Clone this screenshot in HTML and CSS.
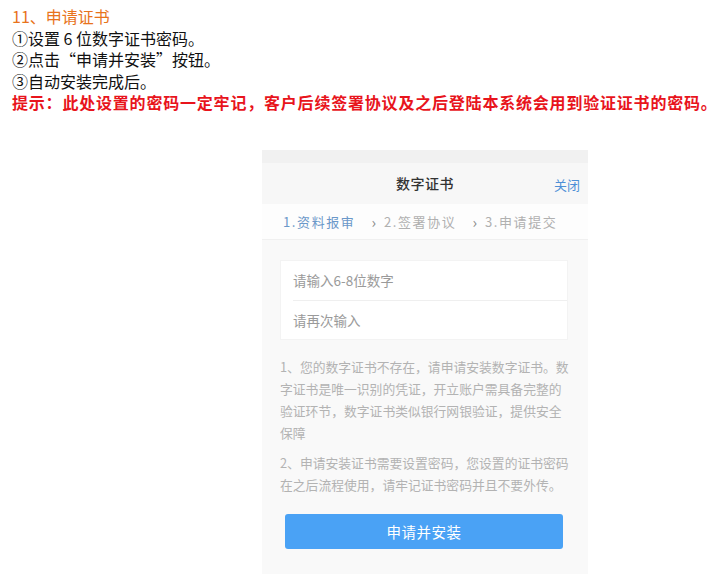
FILE: index.html
```html
<!DOCTYPE html>
<html lang="zh">
<head>
<meta charset="utf-8">
<link rel="stylesheet" href="styles.css">
</head>
<body>
<div class="doc">
  <div class="h">11、申请证书</div>
  <div class="line">①设置 6 位数字证书密码。</div>
  <div class="line">②点击“申请并安装”按钮。</div>
  <div class="line">③自动安装完成后。</div>
  <div class="tip">提示：此处设置的密码一定牢记，客户后续签署协议及之后登陆本系统会用到验证证书的密码。</div>
</div>
<div class="phone">
  <div class="strip"></div>
  <div class="nav">
    <span class="nav-title">数字证书</span>
    <span class="nav-close">关闭</span>
  </div>
  <div class="steps">
    <span class="step active">1.资料报审</span>
    <span class="arrow">›</span>
    <span class="step">2.签署协议</span>
    <span class="arrow">›</span>
    <span class="step">3.申请提交</span>
  </div>
  <div class="form">
    <div class="row">请输入6-8位数字</div>
    <div class="row">请再次输入</div>
  </div>
  <div class="notes">
    <p>1、您的数字证书不存在，请申请安装数字证书。数字证书是唯一识别的凭证，开立账户需具备完整的验证环节，数字证书类似银行网银验证，提供安全保障</p>
    <p>2、申请安装证书需要设置密码，您设置的证书密码在之后流程使用，请牢记证书密码并且不要外传。</p>
  </div>
  <div class="btn-wrap"><div class="btn">申请并安装</div></div>
</div>
</body>
</html>
```
FILE: styles.css
```css
* { box-sizing: border-box; }
html, body { margin: 0; padding: 0; background: #fff; }
body { font-family: "Noto Sans CJK SC", "Noto Sans", sans-serif; }
.doc { padding: 6px 0 0 12px; }
.h { color: #e8731c; font-size: 16px; line-height: 21.5px; }
.line { color: #111; font-size: 16px; line-height: 21.5px; }
.tip { color: #e8141c; font-size: 16px; font-weight: bold; line-height: 21.5px; letter-spacing: 0.8px; white-space: nowrap; }
.phone { width: 326px; margin: 36px 0 0 262px; background: #f9f9f9; display: flex; flex-direction: column; }
.strip { height: 13px; background: #f1f1f1; }
.nav { height: 41px; background: #f7f7f7; display: flex; align-items: center; justify-content: center; position: relative; }
.nav-title { font-size: 14px; color: #333; font-weight: 500; letter-spacing: 0.5px; }
.nav-close { position: absolute; right: 8px; top: 12px; font-size: 13px; color: #4d8fd6; }
.steps { height: 36px; background: #fdfdfd; display: flex; align-items: center; padding-left: 21px; font-size: 13px; color: #b0b0b0; border-bottom: 1px solid #f0f0f0; }
.step { letter-spacing: 1.6px; }
.step.active { color: #6b98c9; }
.arrow { margin: 0 8px 0 16px; font-size: 15px; color: #888; }
.form { margin: 20px 20px 0 18px; background: #fff; border: 1px solid #f3f3f3; }
.row { height: 39px; display: flex; align-items: center; padding-left: 12px; font-size: 13.5px; color: #9a9a9a; }
.row + .row { border-top: 1px solid #efefef; margin-left: 12px; padding-left: 0; }
.notes { padding: 16px 16px 0 18px; }
.notes p { margin: 0 0 7px; font-size: 12.8px; line-height: 22.3px; color: #b3b3b3; }
.btn-wrap { padding: 11px 25px 25px 23px; }
.btn { height: 35px; background: #4aa2f5; border-radius: 3px; color: #fff; font-size: 14.5px; display: flex; align-items: center; justify-content: center; letter-spacing: 0.5px; }
```
